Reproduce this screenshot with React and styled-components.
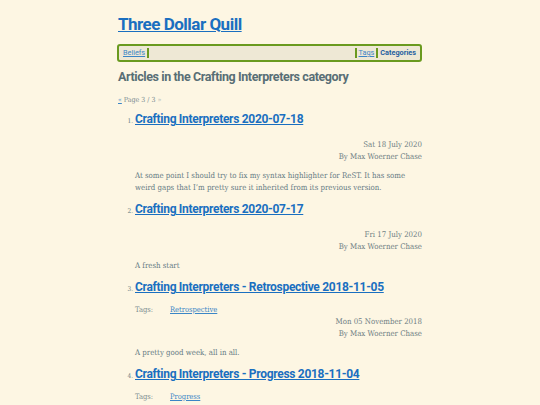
import styled, { createGlobalStyle } from 'styled-components'

const GlobalStyle = createGlobalStyle`
  body {
    margin: 0;
    background: #fdf6e3;
    color: #657b83;
    font-family: 'DejaVu Serif Condensed', 'DejaVu Serif', serif;
  }
`

const headingFont = `Roboto, 'Noto Sans', sans-serif`

const Page = styled.div`
  width: 304px;
  margin: 0 auto;
  padding-top: 12px;
`

const SiteTitle = styled.h1`
  margin: 0;
  font-family: ${headingFont};
  font-weight: 700;
  font-size: 17px;
  letter-spacing: -0.5px;
  line-height: 24px;
  a {
    color: #1a6fc0;
  }
`

const Nav = styled.ul`
  list-style: none;
  margin: 8px 0 0 -1px;
  padding: 2px 2px;
  display: flex;
  align-items: center;
  background: #eee8d5;
  border: 2px solid #6a9a1f;
  border-radius: 3px;
  font-family: ${headingFont};
  font-size: 7.3px;
  line-height: 10px;
`

const NavItem = styled.li`
  padding: 0 2px;
  border-left: ${(p) => (p.$left ? '2px solid #6a9a1f' : 'none')};
  border-right: ${(p) => (p.$right ? '2px solid #6a9a1f' : 'none')};
  margin-left: ${(p) => (p.$push ? 'auto' : '0')};
  a {
    color: ${(p) => (p.$active ? '#1f5fa0' : '#3b86c6')};
    font-weight: ${(p) => (p.$active ? 700 : 400)};
    text-decoration: ${(p) => (p.$active ? 'none' : 'underline')};
  }
`

const Heading = styled.h2`
  margin: 6px 0 0;
  font-family: ${headingFont};
  font-weight: 700;
  font-size: 12.5px;
  letter-spacing: -0.4px;
  line-height: 18px;
  color: #586e75;
`

const Pager = styled.p`
  margin: 9px 0 0;
  font-size: 7px;
  line-height: 10px;
  color: #7c8c90;
  a {
    color: #3b86c6;
  }
  span {
    color: #a9b3b3;
  }
`

const List = styled.ol`
  margin: 4px 0 0;
  padding-left: 17px;
  font-size: 6.5px;
  color: #657b83;
`

const Item = styled.li`
  padding-bottom: 5px;
`

const PostTitle = styled.h3`
  margin: 0;
  font-family: ${headingFont};
  font-weight: 700;
  font-size: 12px;
  letter-spacing: -0.3px;
  line-height: 20px;
  a {
    color: #1a6fc0;
  }
`

const Tags = styled.div`
  display: flex;
  margin-top: 7px;
  font-size: 7.5px;
  line-height: 12px;
  color: #7c8c90;
  a {
    color: #3b86c6;
  }
`

const TagLabel = styled.span`
  width: 35px;
`

const Meta = styled.div`
  margin-top: ${(p) => (p.$tight ? '0' : '10px')};
  text-align: right;
  font-size: 7.8px;
  line-height: 12px;
  color: #6f7f84;
`

const Summary = styled.p`
  margin: 7px 0 0;
  font-size: 7.8px;
  line-height: 12px;
  color: #657b83;
`

const posts = [
  {
    title: 'Crafting Interpreters 2020-07-18',
    date: 'Sat 18 July 2020',
    summary:
      'At some point I should try to fix my syntax highlighter for ReST. It has some weird gaps that I’m pretty sure it inherited from its previous version.',
  },
  {
    title: 'Crafting Interpreters 2020-07-17',
    date: 'Fri 17 July 2020',
    summary: 'A fresh start',
  },
  {
    title: 'Crafting Interpreters - Retrospective 2018-11-05',
    tag: 'Retrospective',
    date: 'Mon 05 November 2018',
    summary: 'A pretty good week, all in all.',
  },
  {
    title: 'Crafting Interpreters - Progress 2018-11-04',
    tag: 'Progress',
    date: 'Sun 04 November 2018',
    summary: 'Progress.',
  },
]

export default function App() {
  return (
    <>
      <GlobalStyle />
      <Page>
        <SiteTitle>
          <a href="#">Three Dollar Quill</a>
        </SiteTitle>
        <Nav>
          <NavItem $right>
            <a href="#">Beliefs</a>
          </NavItem>
          <NavItem $push $left $right>
            <a href="#">Tags</a>
          </NavItem>
          <NavItem $active>
            <a href="#">Categories</a>
          </NavItem>
        </Nav>
        <Heading>Articles in the Crafting Interpreters category</Heading>
        <Pager>
          <a href="#">«</a> Page 3 / 3 <span>»</span>
        </Pager>
        <List>
          {posts.map((post) => (
            <Item key={post.title}>
              <PostTitle>
                <a href="#">{post.title}</a>
              </PostTitle>
              {post.tag && (
                <Tags>
                  <TagLabel>Tags:</TagLabel>
                  <a href="#">{post.tag}</a>
                </Tags>
              )}
              <Meta $tight={!!post.tag}>
                {post.date}
                <br />
                By Max Woerner Chase
              </Meta>
              <Summary>{post.summary}</Summary>
            </Item>
          ))}
        </List>
      </Page>
    </>
  )
}
